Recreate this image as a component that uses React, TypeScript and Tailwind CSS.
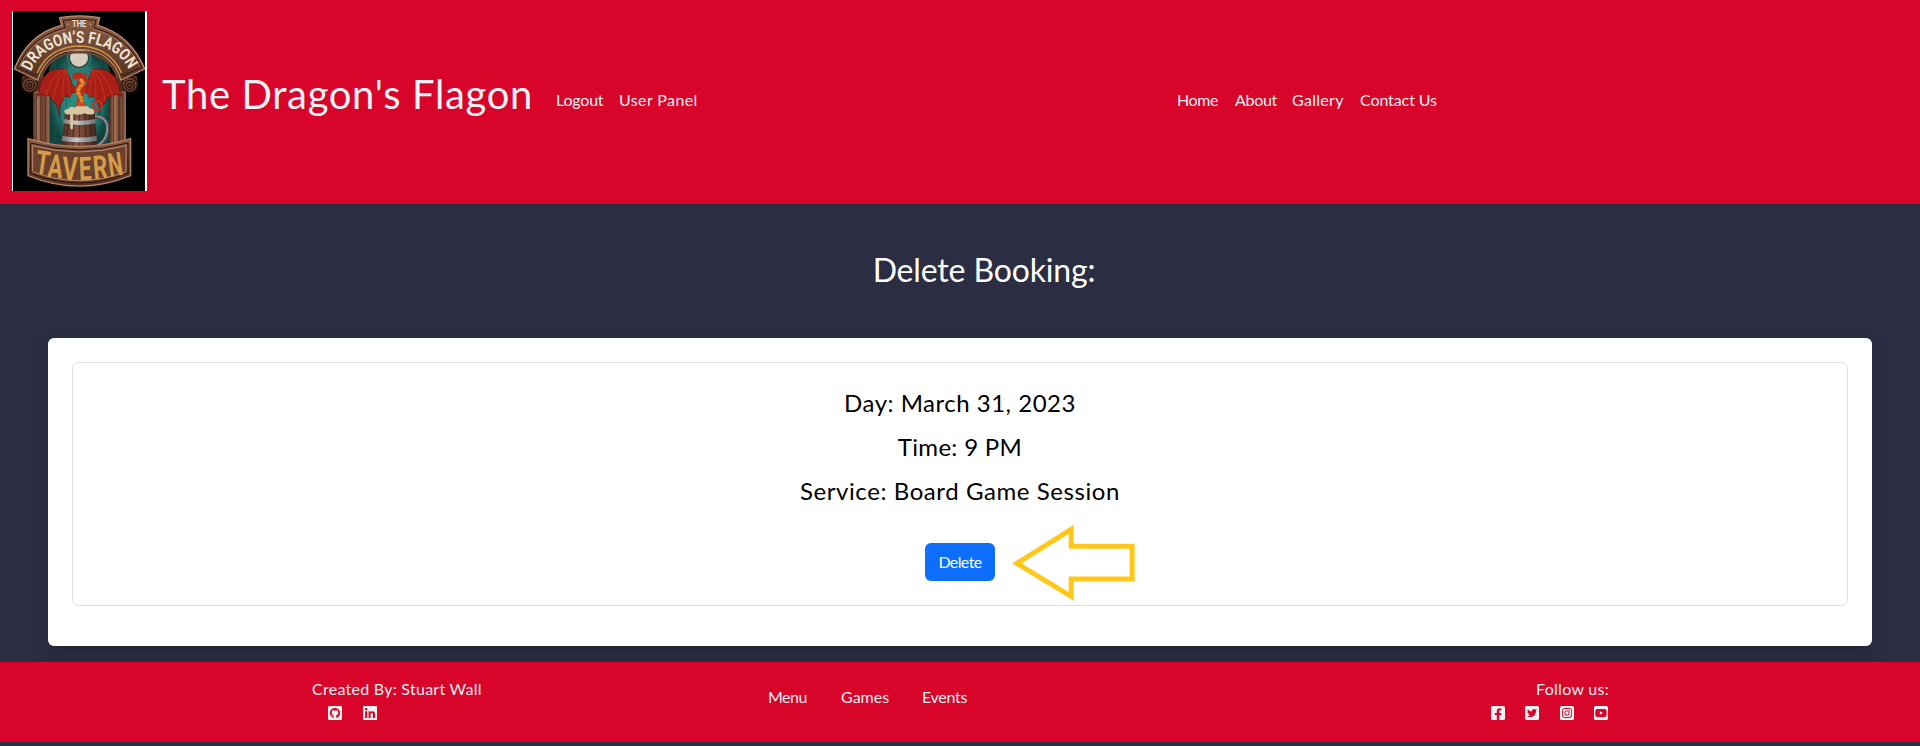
import type { ReactNode } from "react";
import {
  FaFacebookSquare,
  FaGithubSquare,
  FaInstagramSquare,
  FaLinkedin,
  FaTwitterSquare,
  FaYoutubeSquare,
} from "react-icons/fa";

const signLetters = [
  { char: "T", x: 103, y: 519, width: 42, angle: 8 },
  { char: "A", x: 141, y: 531, width: 45, angle: 5 },
  { char: "V", x: 186, y: 539, width: 46, angle: 2 },
  { char: "E", x: 238, y: 541, width: 38, angle: -2 },
  { char: "R", x: 282, y: 538, width: 43, angle: -5 },
  { char: "N", x: 329, y: 530, width: 43, angle: -8 },
];

function TavernLogo() {
  return (
    <svg viewBox="36 33 405 540" className="h-[180px] w-[135px] shrink-0" role="img">
      <defs>
        <linearGradient id="wood" x1="0" x2="0" y1="0" y2="1">
          <stop offset="0" stopColor="#8a5d48" />
          <stop offset="1" stopColor="#55321f" />
        </linearGradient>
        <linearGradient id="post" x1="0" x2="1" y1="0" y2="0">
          <stop offset="0" stopColor="#4f2f22" />
          <stop offset="0.3" stopColor="#a77759" />
          <stop offset="0.6" stopColor="#694030" />
          <stop offset="1" stopColor="#9a6b50" />
        </linearGradient>
        <linearGradient id="barrel" x1="0" x2="1" y1="0" y2="0">
          <stop offset="0" stopColor="#4b2c20" />
          <stop offset="0.45" stopColor="#865640" />
          <stop offset="1" stopColor="#3c2219" />
        </linearGradient>
        <linearGradient id="steel" x1="0" x2="1" y1="0" y2="0">
          <stop offset="0" stopColor="#6f7378" />
          <stop offset="0.4" stopColor="#c3c6cb" />
          <stop offset="1" stopColor="#65686d" />
        </linearGradient>
        <radialGradient id="teal">
          <stop offset="0" stopColor="#2f9488" />
          <stop offset="0.7" stopColor="#237a72" />
          <stop offset="1" stopColor="#12433f" />
        </radialGradient>
        <path id="archText" d="M93 215 C134 101 340 97 389 215" />
      </defs>
      <rect x="36" y="33" width="405" height="540" fill="#fff" />
      <rect x="39" y="33" width="396" height="540" fill="#000" />

      <path d="M146 440 V210 Q160 155 238 153 Q316 155 330 210 V440 Z" fill="url(#teal)" />
      <path d="M165 180V430M182 170V430M199 160V320M280 160V320M298 170V340M315 190V430" stroke="#155750" strokeWidth="2" />
      <circle cx="237" cy="172" r="35" fill="#234f4b" stroke="#65988c" strokeWidth="2" />
      <circle cx="237" cy="173" r="27" fill="#d8cdbd" />

      <rect x="99" y="232" width="49" height="205" fill="url(#post)" />
      <rect x="329" y="232" width="49" height="205" fill="url(#post)" />
      <path d="M109 280V425M122 250V425M137 225V430M341 225V430M357 250V425M369 280V425" stroke="#3d2318" strokeWidth="2" />
      <path d="M66 228H148V274H99Q68 285 64 251Z M411 228H329V274H378Q409 285 413 251Z" fill="#55301f" />
      <g fill="none" stroke="#2b160f" strokeWidth="4">
        <circle cx="89" cy="254" r="23" fill="#6b4230" />
        <circle cx="389" cy="254" r="23" fill="#6b4230" />
        <circle cx="89" cy="255" r="14" />
        <circle cx="389" cy="255" r="14" />
        <circle cx="89" cy="256" r="6" />
        <circle cx="389" cy="256" r="6" />
      </g>

      <path
        d="M43 207 C67 145 112 94 185 76 L179 53 Q238 42 299 53 L293 76 C361 94 410 145 434 207 L363 240 C343 178 300 150 238 149 C176 150 133 178 113 240 Z"
        fill="url(#wood)"
        stroke="#c08a6c"
        strokeWidth="4"
      />
      <path
        d="M53 202 C77 147 118 103 195 84 L190 61 Q238 53 288 61 L282 84 C351 101 400 145 424 202 L369 227 C343 166 299 139 238 138 C177 139 133 166 107 227 Z"
        fill="none"
        stroke="#2e1a13"
        strokeWidth="3"
      />
      <path d="M57 201 C80 149 122 107 198 88 M420 201 C397 149 350 107 278 88" fill="none" stroke="#b88669" strokeWidth="2" />
      <path d="M111 220 C137 161 181 139 238 138 C295 139 339 161 365 220" fill="none" stroke="#d89a45" strokeWidth="4" />
      <path d="M121 236 C141 181 181 157 238 156 C295 157 335 181 355 236" fill="none" stroke="#694331" strokeWidth="8" />
      <circle cx="205" cy="73" r="2.5" fill="#d9a34d" />
      <circle cx="271" cy="73" r="2.5" fill="#d9a34d" />
      <g fill="#eee5d3" fontFamily="'Roboto', 'Liberation Sans', sans-serif" fontWeight="700">
        <text x="216" y="80" fontSize="25" textLength="43" lengthAdjust="spacingAndGlyphs">THE</text>
        <text fontSize="49">
          <textPath href="#archText" textLength="358" lengthAdjust="spacingAndGlyphs">DRAGON’S FLAGON</textPath>
        </text>
      </g>

      <path
        d="M230 268 Q211 249 213 239 Q203 227 201 207 Q158 203 139 223 Q121 243 117 272 L111 289 Q128 278 137 289 Q151 280 157 302 Q171 304 178 350 Q175 314 189 302 Q190 281 209 293 Q212 276 230 276 Z
           M249 268 Q268 249 264 238 Q273 227 275 207 Q317 203 337 223 Q355 243 359 272 L365 289 Q347 278 338 289 Q323 281 317 308 Q301 313 297 347 Q302 315 287 302 Q286 282 268 293 Q266 276 249 276 Z"
        fill="#a91e16"
        stroke="#5c130e"
        strokeWidth="2"
      />
      <path
        d="M201 208 Q157 213 137 289 M201 208 Q171 229 157 300 M201 208 Q184 238 189 300 M201 208 L210 291 M275 208 Q319 213 338 289 M275 208 Q305 229 317 306 M275 208 Q292 238 287 300 M275 208 L268 291"
        fill="none"
        stroke="#d0402a"
        strokeWidth="2"
      />
      <path d="M215 226 L228 219 L240 216 L250 224 L263 220 L257 234 L270 241 L263 249 L253 246 L259 267 L249 291 L256 321 H227 L233 292 L223 270 L231 249 L236 236 L222 237 Z" fill="#bd2a17" />
      <path d="M239 239 Q251 242 247 253 Q227 270 238 286 Q249 298 242 318" fill="none" stroke="#dc932b" strokeWidth="11" />
      <path d="M234 252H251M230 263H246M228 274H243M231 286H247M235 298H251M234 309H250" stroke="#b15c1e" strokeWidth="2" />
      <path d="M253 322 Q297 346 305 319 Q307 303 289 304 Q273 309 278 321 Q287 329 291 315" fill="none" stroke="#c72f22" strokeWidth="5" />
      <path d="M284 350 Q331 352 323 398 Q318 427 291 439" fill="none" stroke="#3f464c" strokeWidth="12" />
      <path d="M284 349 Q328 351 321 397 Q315 425 291 438" fill="none" stroke="#8b9197" strokeWidth="6" />

      <path d="M195 335 H284 L292 444 H184 Z" fill="url(#barrel)" />
      <path d="M207 342L199 441M222 342L218 441M238 342V441M254 342L258 441M269 342L276 441" stroke="#2c1811" strokeWidth="2" />
      <path d="M191 357 Q239 368 287 357 L288 370 Q239 380 190 370Z M187 407 Q239 418 290 407 L291 422 Q239 431 185 422Z" fill="url(#steel)" />
      <path d="M195 340 Q188 328 204 328 Q210 316 224 323 Q235 313 249 319 Q262 314 269 325 Q284 326 283 341 Q267 347 255 340 Q238 347 220 342 L219 384 Q215 393 211 384 L210 342 Q202 347 195 340Z" fill="#d8c5a3" />
      <path d="M229 319L235 304L248 307L254 319Z" fill="#ce4c20" />

      <path d="M84 416 Q238 463 392 416 V527 Q238 590 84 527 Z" fill="url(#wood)" stroke="#b68061" strokeWidth="4" />
      <path d="M92 429 Q238 470 384 429 V520 Q238 578 92 520 Z" fill="none" stroke="#26140e" strokeWidth="3" />
      <path d="M98 437 Q238 475 378 437 V515 Q238 569 98 515 Z" fill="#6b412e" stroke="#bd8666" strokeWidth="3" />
      <g fill="#d59b49" fontFamily="'Roboto', 'Liberation Sans', sans-serif" fontWeight="700" fontSize="98">
        {signLetters.map((l) => (
          <text
            key={l.char}
            transform={`translate(${l.x} ${l.y}) rotate(${l.angle})`}
            textLength={l.width}
            lengthAdjust="spacingAndGlyphs"
          >
            {l.char}
          </text>
        ))}
      </g>
    </svg>
  );
}

function NavLink({ className, children }: { className: string; children: ReactNode }) {
  return (
    <a href="#" className={`block whitespace-nowrap leading-6 ${className}`}>
      {children}
    </a>
  );
}

export default function App() {
  return (
    <div className="flex h-[746px] flex-col overflow-hidden bg-[#2b2d42] font-['Lato','Open_Sans',sans-serif] text-base text-[#edf2f4]">
      <header className="flex h-[204px] shrink-0 items-start bg-[#d90429] pt-[11px] pl-3">
        <TavernLogo />
        <h1 className="mt-[53px] ml-[15px] w-[394px] shrink-0 text-[40px] leading-[60px] font-normal tracking-[0.65px] whitespace-nowrap">
          The Dragon's Flagon
        </h1>
        <nav className="mt-[77px] flex w-[621px] shrink-0">
          <NavLink className="w-[63px] tracking-[-0.2px]">Logout</NavLink>
          <NavLink className="tracking-[0.4px]">User Panel</NavLink>
        </nav>
        <nav className="mt-[77px] flex">
          <NavLink className="w-[58px] tracking-[-0.4px]">Home</NavLink>
          <NavLink className="w-[57px] tracking-[-0.3px]">About</NavLink>
          <NavLink className="w-[68px] tracking-[0.3px]">Gallery</NavLink>
          <NavLink className="tracking-[-0.1px]">Contact Us</NavLink>
        </nav>
      </header>

      <main className="h-[458px] shrink-0 px-12 pt-[46px]">
        <h2 className="ml-12 text-center text-[32px] leading-10 font-normal tracking-[-0.15px] text-white">Delete Booking:</h2>
        <section className="mt-12 h-[308px] rounded-md bg-white p-6 text-black shadow-[0_8px_16px_rgba(0,0,0,0.15)]">
          <div className="flex h-[244px] flex-col items-center rounded-md border border-[#dee2e6] pt-[18px] text-2xl leading-[44px]">
            <p className="tracking-[0.5px]">Day: March 31, 2023</p>
            <p className="tracking-[0.31px]">Time: 9 PM</p>
            <p className="tracking-[0.58px]">Service: Board Game Session</p>
            <div className="relative mt-[30px]">
              <button className="flex h-[38px] w-[70px] items-center justify-center rounded-md bg-[#0d6efd] text-base leading-6 tracking-[-0.6px] text-white">
                Delete
              </button>
              <svg viewBox="338 45 368 228" className="absolute top-[-18px] left-[87px] h-[76px] w-[123px]" fill="none">
                <path d="M352 160L515 58V109H698V207H515V259Z" stroke="#ffc719" strokeWidth="15" />
              </svg>
            </div>
          </div>
        </section>
      </main>

      <footer className="flex h-20 shrink-0 bg-[#d90429] pt-[15px]">
        <div className="w-[768px] shrink-0 pl-[312px]">
          <p className="leading-6 tracking-[0.27px] whitespace-nowrap">Created By: Stuart Wall</p>
          <div className="mt-1 flex gap-[18.5px] pl-[15px]">
            <FaGithubSquare />
            <FaLinkedin />
          </div>
        </div>
        <nav className="mt-2 flex w-[720px] shrink-0">
          <NavLink className="w-[73px] tracking-[-0.5px]">Menu</NavLink>
          <NavLink className="w-[81px]">Games</NavLink>
          <NavLink className="tracking-[-0.3px]">Events</NavLink>
        </nav>
        <div className="flex w-[121px] flex-col items-end">
          <p className="leading-6 tracking-[0.28px] whitespace-nowrap">Follow us:</p>
          <div className="mt-1 flex gap-[18.5px]">
            <FaFacebookSquare />
            <FaTwitterSquare />
            <FaInstagramSquare />
            <FaYoutubeSquare />
          </div>
        </div>
      </footer>
    </div>
  );
}
